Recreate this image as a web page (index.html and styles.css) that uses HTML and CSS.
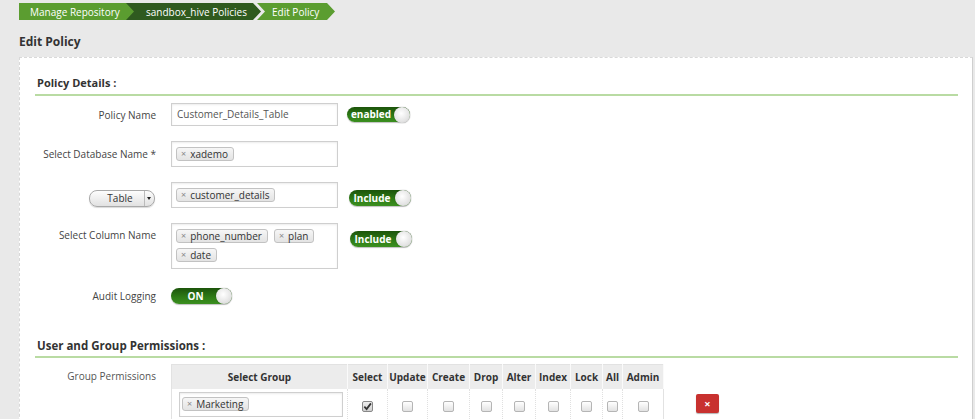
FILE: index.html
```html
<!DOCTYPE html>
<html>
<head>
<meta charset="utf-8">
<link rel="stylesheet" href="styles.css">
</head>
<body>
<div class="crumbs">
  <a class="crumb first">Manage Repository</a>
  <a class="crumb dark">sandbox_hive Policies</a>
  <a class="crumb last">Edit Policy</a>
</div>
<h1 class="page-title">Edit Policy</h1>
<div class="panel">
  <div class="section-title st1">Policy Details :</div>

  <div class="form-row">
    <div class="label">Policy Name</div>
    <div class="input text-input">Customer_Details_Table</div>
    <div class="toggle t-enabled"><span class="t-text">enabled</span><span class="knob"></span></div>
  </div>

  <div class="form-row">
    <div class="label">Select Database Name *</div>
    <div class="input tag-input"><span class="tag"><i>×</i>xademo</span></div>
  </div>

  <div class="form-row top">
    <div class="label lbl-btn"><span class="sel-btn"><span class="sel-text">Table</span><span class="sel-arrow"></span></span></div>
    <div class="input tag-input"><span class="tag"><i>×</i>customer_details</span></div>
    <div class="toggle t-include t-mid"><span class="t-text">Include</span><span class="knob"></span></div>
  </div>

  <div class="form-row top">
    <div class="label lbl-top">Select Column Name</div>
    <div class="input tag-input tall">
      <span class="tag"><i>×</i>phone_number</span><span class="tag"><i>×</i>plan</span><span class="tag"><i>×</i>date</span>
    </div>
    <div class="toggle t-include t-top"><span class="t-text">Include</span><span class="knob"></span></div>
  </div>

  <div class="form-row audit">
    <div class="label">Audit Logging</div>
    <div class="toggle t-on"><span class="t-text">ON</span><span class="knob"></span></div>
  </div>

  <div class="section-title st2">User and Group Permissions :</div>

  <div class="perm-row">
    <div class="label perm-label">Group Permissions</div>
    <table class="perm-table">
      <colgroup>
        <col class="c-group"><col class="c-sel"><col class="c-upd"><col class="c-cre"><col class="c-drop"><col class="c-alt"><col class="c-idx"><col class="c-lock"><col class="c-all"><col class="c-adm">
      </colgroup>
      <thead>
        <tr>
          <th>Select Group</th>
          <th>Select</th>
          <th>Update</th>
          <th>Create</th>
          <th>Drop</th>
          <th>Alter</th>
          <th>Index</th>
          <th>Lock</th>
          <th>All</th>
          <th>Admin</th>
        </tr>
      </thead>
      <tbody>
        <tr>
          <td><div class="group-input"><span class="tag"><i>×</i>Marketing</span></div></td>
          <td><span class="cb checked"><svg viewBox="0 0 10 10" width="9" height="9"><path d="M1.5 5.2 L4 7.8 L8.8 1.5" fill="none" stroke="#333" stroke-width="2"/></svg></span></td>
          <td><span class="cb"></span></td>
          <td><span class="cb"></span></td>
          <td><span class="cb"></span></td>
          <td><span class="cb"></span></td>
          <td><span class="cb"></span></td>
          <td><span class="cb"></span></td>
          <td><span class="cb"></span></td>
          <td><span class="cb"></span></td>
        </tr>
      </tbody>
    </table>
    <span class="del-btn">×</span>
  </div>
</div>
</body>
</html>
```

FILE: styles.css
```css
html, body {
  margin: 0;
  padding: 0;
}
body {
  background: #e9e9e9;
  font-family: "Open Sans", "Liberation Sans", sans-serif;
  color: #333;
  font-size: 10px;
  overflow: hidden;
  height: 419px;
}

/* breadcrumbs */
.crumbs {
  display: flex;
  padding: 3px 0 0 19px;
  height: 17px;
}
.crumb {
  display: flex;
  align-items: center;
  height: 17px;
  color: #fff;
  font-size: 10px;
  background: #5b9d30;
  box-sizing: border-box;
  white-space: nowrap;
}
.crumb.first {
  width: 118px;
  padding-left: 11px;
  clip-path: polygon(0 0, calc(100% - 8px) 0, 100% 50%, calc(100% - 8px) 100%, 0 100%);
}
.crumb.dark {
  width: 135px;
  margin-left: -11px;
  padding-left: 20px;
  background: #2f5a1f;
  clip-path: polygon(0 0, calc(100% - 8px) 0, 100% 50%, calc(100% - 8px) 100%, 0 100%, 8px 50%);
}
.crumb.last {
  width: 78px;
  margin-left: -4px;
  padding-left: 15px;
  clip-path: polygon(0 0, calc(100% - 8px) 0, 100% 50%, calc(100% - 8px) 100%, 0 100%, 8px 50%);
}

.page-title {
  margin: 15px 0 0 19px;
  font-size: 12px;
  line-height: 14px;
  font-weight: 700;
  color: #333;
  height: 14px;
}

/* panel */
.panel {
  margin: 8px 0 0 19px;
  width: 954px;
  box-sizing: border-box;
  background: #fff;
  border-top: 1px dashed #d9d9d9;
  border-left: 1px dashed #d9d9d9;
  border-right: 1px solid #cfcfcf;
  padding: 17px 14px 0 15px;
  height: 400px;
}
.section-title {
  font-size: 11px;
  font-weight: 700;
  line-height: 16px;
  color: #333;
  padding-left: 2px;
  border-bottom: 2px solid #b9dba3;
}
.st1 {
  padding-bottom: 3px;
  margin-bottom: 7px;
}
.st2 {
  font-size: 11.5px;
  margin-top: 31px;
  padding-bottom: 2px;
  margin-bottom: 6px;
}

.form-row {
  display: flex;
  align-items: center;
  margin-bottom: 15px;
}
.form-row.top {
  align-items: flex-start;
}
.form-row.audit {
  height: 23px;
}
.label {
  width: 121px;
  margin-right: 15px;
  text-align: right;
  font-size: 10px;
  line-height: 14px;
  color: #444;
  display: flex;
  justify-content: flex-end;
  flex-shrink: 0;
}
.lbl-top {
  padding-top: 5px;
}
.lbl-btn {
  padding-top: 8px;
}

.input {
  width: 167px;
  box-sizing: border-box;
  border: 1px solid #cfcfcf;
  box-shadow: inset 0 1px 2px rgba(0,0,0,0.08);
  background: #fff;
  flex-shrink: 0;
}
.text-input {
  height: 23px;
  line-height: 21px;
  padding-left: 5px;
  font-size: 10px;
  color: #555;
}
.tag-input {
  height: 26px;
  padding: 5px 0 0 4px;
  display: flex;
  flex-wrap: wrap;
  align-content: flex-start;
  gap: 5px 6px;
}
.tag-input.tall {
  height: 46px;
}
.tag {
  display: inline-flex;
  align-items: center;
  height: 14px;
  box-sizing: border-box;
  padding: 0 5px 0 4px;
  border: 1px solid #c2c2c2;
  border-radius: 3px;
  background: linear-gradient(#f6f6f6, #e3e3e3);
  font-size: 10px;
  color: #333;
  line-height: 12px;
  white-space: nowrap;
}
.tag i {
  font-style: normal;
  color: #888;
  font-size: 9px;
  margin-right: 4px;
}

/* toggles */
.toggle {
  display: flex;
  align-items: center;
  height: 15px;
  border-radius: 8px;
  background: linear-gradient(#1c540b, #2f7d16 60%, #3b8f20);
  box-shadow: 0 1px 1px rgba(0,0,0,0.25);
  color: #fff;
  font-weight: 700;
  font-size: 10px;
  flex-shrink: 0;
}
.t-text {
  flex: 1;
  text-align: center;
  line-height: 15px;
}
.knob {
  width: 16px;
  height: 16px;
  border-radius: 50%;
  background: radial-gradient(circle at 45% 40%, #ffffff, #e4e4e4 60%, #c9c9c9);
  box-shadow: 0 0 1px rgba(0,0,0,0.5);
  flex-shrink: 0;
}
.t-enabled {
  width: 63px;
  margin-left: 9px;
}
.t-enabled .t-text {
  padding-left: 1px;
}
.t-include {
  width: 62px;
  height: 16px;
  margin-left: 11px;
}
.t-include .t-text {
  line-height: 16px;
}
.t-mid {
  margin-top: 8px;
}
.t-top {
  margin-top: 8px;
  margin-left: 12px;
}
.t-on {
  width: 61px;
  height: 16px;
}
.t-on .t-text {
  line-height: 16px;
  padding-left: 4px;
}

/* select button */
.sel-btn {
  display: flex;
  align-items: stretch;
  width: 66px;
  height: 17px;
  box-sizing: border-box;
  border: 1px solid #a9a9a9;
  border-radius: 8px;
  background: linear-gradient(#fdfdfd, #e1e1e1);
  box-shadow: 0 1px 1px rgba(0,0,0,0.15);
  margin-right: 1px;
}
.sel-text {
  flex: 1;
  text-align: center;
  font-size: 10px;
  line-height: 15px;
  color: #333;
  padding-left: 6px;
}
.sel-arrow {
  width: 9px;
  border-left: 1px solid #bbb;
  display: flex;
  align-items: center;
  justify-content: center;
}
.sel-arrow::after {
  content: "";
  border-left: 2px solid transparent;
  border-right: 2px solid transparent;
  border-top: 3px solid #222;
  margin-right: 2px;
}

/* permissions */
.perm-row {
  display: flex;
  align-items: flex-start;
}
.perm-label {
  padding-top: 5px;
  color: #555;
}
.perm-table {
  border-collapse: collapse;
  table-layout: fixed;
  width: 492px;
  border: 1px solid #e2e2e2;
  flex-shrink: 0;
}
.perm-table th {
  background: #ececec;
  height: 24px;
  padding: 0;
  font-size: 10px;
  font-weight: 700;
  color: #333;
  border-right: 1px solid #fafafa;
  text-align: center;
  white-space: nowrap;
  overflow: visible;
}
.perm-table td {
  height: 32px;
  padding: 0;
  text-align: center;
  vertical-align: top;
  border-right: 1px dotted #e0e0e0;
}
.c-group { width: 176px; }
.c-sel { width: 40px; }
.c-upd { width: 40px; }
.c-cre { width: 42px; }
.c-drop { width: 33px; }
.c-alt { width: 33px; }
.c-idx { width: 35px; }
.c-lock { width: 32px; }
.c-all { width: 20px; }
.c-adm { width: 41px; }

.group-input {
  margin: 3px 0 0 7px;
  width: 164px;
  height: 25px;
  box-sizing: border-box;
  border: 1px solid #cfcfcf;
  box-shadow: inset 0 1px 2px rgba(0,0,0,0.08);
  padding: 4px 0 0 2px;
  display: flex;
  align-items: flex-start;
}
.cb {
  display: inline-flex;
  align-items: center;
  justify-content: center;
  width: 9px;
  height: 9px;
  margin-top: 12px;
  border: 1px solid #b5b5b5;
  border-radius: 2px;
  background: linear-gradient(#ffffff, #e2e2e2);
}
.cb.checked {
  border-color: #888;
  background: linear-gradient(#eee, #cfcfcf);
}
.del-btn {
  margin: 30px 0 0 32px;
  width: 23px;
  height: 19px;
  border-radius: 2px;
  background: #c8312f;
  color: #fff;
  font-weight: 700;
  font-size: 11px;
  line-height: 19px;
  text-align: center;
  box-shadow: 0 1px 1px rgba(0,0,0,0.3);
}
```
